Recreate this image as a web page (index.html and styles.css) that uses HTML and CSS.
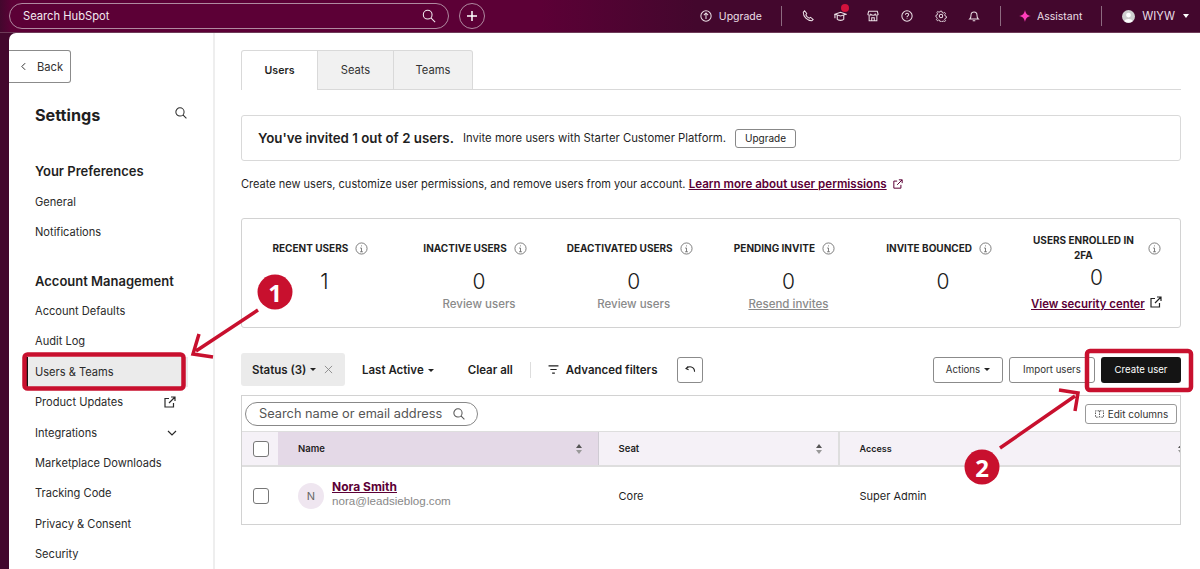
FILE: index.html
```html
<!DOCTYPE html>
<html lang="en">
<head>
<meta charset="utf-8">
<title>Users &amp; Teams</title>
<link rel="stylesheet" href="styles.css">
</head>
<body>
<header class="topbar">
  <div class="global-search"><span>Search HubSpot</span>
    <svg class="ic16" viewBox="0 0 16 16"><circle cx="6.5" cy="6.5" r="5"/><path d="M10.2 10.2 15 15"/></svg>
  </div>
  <div class="plus"><svg viewBox="0 0 12 12"><path d="M6 1v10M1 6h10"/></svg></div>
  <div class="top-right">
    <div class="top-item"><svg class="ic13" viewBox="0 0 14 14"><circle cx="7" cy="7" r="6"/><path d="M7 10.5v-7M4.5 6 7 3.5 9.500 6"/></svg><span>Upgrade</span></div>
    <i class="top-sep sep-a"></i>
    <svg class="ic12 t1" viewBox="0 0 14 14"><path d="M3 1 1.500 2.500C1.500 8 6 12.500 11.500 12.500L13 11 10 8.500 8.500 9.500C7 9 5 7 4.500 5.500L5.500 4Z"/></svg>
    <div class="grad"><svg class="ic14" viewBox="0 0 14 14"><path d="M1 4.500 7 2.500l6 2-6 2zM3.500 6v4c1 1.500 6 1.500 7 0V6M1 9V4.500"/></svg><b></b></div>
    <svg class="ic12 t2" viewBox="0 0 14 14"><path d="M2 1.500h10L13 5c-.5 1.500-3 1.500-3.500 0-.5 1.500-4 1.500-5 0C4 6.500 1.500 6.500 1 5zM2.500 7v5.500h9V7M5.500 12.500V9h3v3.500"/></svg>
    <svg class="ic12 t3" viewBox="0 0 14 14"><circle cx="7" cy="7" r="6"/><path d="M5.200 5.500C5.200 3 9 3.300 8.900 5.500 8.800 7 7 6.800 7 8.500M7 10v.6"/></svg>
    <svg class="ic12 t4" viewBox="0 0 14 14"><circle cx="7" cy="7" r="2"/><path d="M6 1h2l.4 1.700 1.600.7 1.500-.9 1.200 1.500-1 1.400.5 1.600 1.600.7v1.800l-1.600.6-.5 1.600 1 1.400-1.300 1.300-1.500-1-1.600.7L8 14.500H6l-.4-1.700-1.600-.7-1.500 1L1.200 11.800l1-1.400-.6-1.600L0.500 8.100V6.300l1.600-.6.500-1.600-1-1.400 1.300-1.300 1.500.9 1.600-.7Z" transform="translate(.6 .5) scale(.92)"/></svg>
    <svg class="ic12 t5" viewBox="0 0 14 14"><path d="M2 10.500c1.200-1 1.500-2 1.500-4.500C3.500 1 10.500 1 10.500 6c0 2.500.3 3.500 1.500 4.500ZM5.500 12.500h3"/></svg>
    <i class="top-sep sep-b"></i>
    <div class="top-item assist"><svg class="spark" viewBox="0 0 14 14"><path d="M7 0c.8 4.200 2.200 6 7 7-4.800 1-6.200 2.800-7 7-.8-4.200-2.200-6-7-7 4.800-1 6.200-2.800 7-7Z"/></svg><span>Assistant</span></div>
    <i class="top-sep sep-c"></i>
    <div class="top-item account"><svg class="avatar-dot" viewBox="0 0 14 14"><circle class="av-bg" cx="7" cy="7" r="7"/><circle class="av-fg" cx="7" cy="5.500" r="2.600"/><path class="av-fg" d="M2.500 12c.8-3 8.200-3 9 0-2 2-7 2-9 0Z"/></svg><span class="acct-name">WIYW</span><i class="caret caret-w"></i></div>
  </div>
</header>

<div class="shell">
  <aside class="sidebar">
    <button class="back"><svg viewBox="0 0 6 10"><path d="M5 1 1 5l4 4"/></svg>Back</button>
    <div class="side-title"><h1>Settings</h1><svg class="ic12" viewBox="0 0 14 14"><circle cx="5.800" cy="5.800" r="4.800"/><path d="m9.300 9.300 4 4"/></svg></div>
    <h2 class="side-h first">Your Preferences</h2>
    <a class="side-link">General</a>
    <a class="side-link">Notifications</a>
    <h2 class="side-h second">Account Management</h2>
    <a class="side-link">Account Defaults</a>
    <a class="side-link">Audit Log</a>
    <a class="side-link active">Users &amp; Teams</a>
    <a class="side-link">Product Updates<svg class="ic12 ext" viewBox="0 0 12 12"><path d="M9.500 7v4h-8.500V2.500H5M7 1h4v4M11 1 5 7"/></svg></a>
    <a class="side-link">Integrations<svg class="chev" viewBox="0 0 10 6"><path d="m1 1 4 4 4-4"/></svg></a>
    <a class="side-link">Marketplace Downloads</a>
    <a class="side-link">Tracking Code</a>
    <a class="side-link">Privacy &amp; Consent</a>
    <a class="side-link">Security</a>
  </aside>

  <main class="main">
    <nav class="tabs">
      <div class="tab tab-users selected">Users</div>
      <div class="tab tab-seats">Seats</div>
      <div class="tab tab-teams">Teams</div>
    </nav>

    <section class="banner">
      <strong>You've invited 1 out of 2 users.</strong>
      <span>Invite more users with Starter Customer Platform.</span>
      <button class="btn-sm">Upgrade</button>
    </section>

    <p class="intro">Create new users, customize user permissions, and remove users from your account. <a>Learn more about user permissions</a><svg class="ic10" viewBox="0 0 12 12"><path d="M9.500 7v4h-8.500V2.500H5M7 1h4v4M11 1 5 7"/></svg></p>

    <section class="stats">
      <div class="stat"><div class="stat-h"><span>RECENT USERS</span><svg class="info" viewBox="0 0 14 14"><circle cx="7" cy="7" r="6"/><path d="M7 6.500v4M7 3.700v1M5.500 6.500H7M5.500 10.500h3"/></svg></div><div class="num">1</div></div>
      <div class="stat"><div class="stat-h"><span>INACTIVE USERS</span><svg class="info" viewBox="0 0 14 14"><circle cx="7" cy="7" r="6"/><path d="M7 6.500v4M7 3.700v1M5.500 6.500H7M5.500 10.500h3"/></svg></div><div class="num">0</div><div class="stat-sub">Review users</div></div>
      <div class="stat"><div class="stat-h"><span>DEACTIVATED USERS</span><svg class="info" viewBox="0 0 14 14"><circle cx="7" cy="7" r="6"/><path d="M7 6.500v4M7 3.700v1M5.500 6.500H7M5.500 10.500h3"/></svg></div><div class="num">0</div><div class="stat-sub">Review users</div></div>
      <div class="stat"><div class="stat-h"><span>PENDING INVITE</span><svg class="info" viewBox="0 0 14 14"><circle cx="7" cy="7" r="6"/><path d="M7 6.500v4M7 3.700v1M5.500 6.500H7M5.500 10.500h3"/></svg></div><div class="num">0</div><div class="stat-sub under">Resend invites</div></div>
      <div class="stat"><div class="stat-h"><span>INVITE BOUNCED</span><svg class="info" viewBox="0 0 14 14"><circle cx="7" cy="7" r="6"/><path d="M7 6.500v4M7 3.700v1M5.500 6.500H7M5.500 10.500h3"/></svg></div><div class="num">0</div></div>
      <div class="stat stat-wide"><div class="stat-h"><span>USERS ENROLLED IN 2FA</span><svg class="info" viewBox="0 0 14 14"><circle cx="7" cy="7" r="6"/><path d="M7 6.500v4M7 3.700v1M5.500 6.500H7M5.500 10.500h3"/></svg></div><div class="num">0</div><div class="stat-link"><a>View security center</a><svg class="ic12" viewBox="0 0 12 12"><path d="M9.500 7v4h-8.500V2.500H5M7 1h4v4M11 1 5 7"/></svg></div></div>
    </section>

    <section class="filters">
      <div class="chip">Status (3)<i class="caret"></i><svg class="x" viewBox="0 0 10 10"><path d="m1 1 8 8M9 1 1 9"/></svg></div>
      <div class="f-item f-last">Last Active<i class="caret"></i></div>
      <div class="f-item f-clear">Clear all</div>
      <i class="f-sep"></i>
      <div class="f-item f-adv"><svg viewBox="0 0 12 10"><path d="M.5 1h11M2.500 5h7M4.500 9h3"/></svg>Advanced filters</div>
      <button class="undo"><svg viewBox="0 0 12 10"><path d="M3.500 1.500 1 4l2.900 1.200M1 4C4 .8 10.500 1 10.500 7.500"/></svg></button>
      <div class="f-actions">
        <button class="btn">Actions<i class="caret"></i></button>
        <button class="btn">Import users</button>
        <button class="btn-primary">Create user</button>
      </div>
    </section>

    <section class="table">
      <div class="t-tools">
        <div class="t-search"><span>Search name or email address</span><svg class="ic12" viewBox="0 0 14 14"><circle cx="5.800" cy="5.800" r="4.800"/><path d="m9.300 9.300 4 4"/></svg></div>
        <button class="edit-cols"><svg viewBox="0 0 12 10"><path class="dash" d="M5.500 1H1v8h4.500M6.500 1H11v8H6.500M6 1v8"/></svg>Edit columns</button>
      </div>
      <div class="t-row t-head">
        <div class="c-check"><i class="check"></i></div>
        <div class="c-name sorted">Name<span class="sort"><i></i><i></i></span></div>
        <div class="c-seat">Seat<span class="sort"><i></i><i></i></span></div>
        <div class="c-access">Access<span class="sort clip"><i></i><i></i></span></div>
      </div>
      <div class="t-row t-body">
        <div class="c-check"><i class="check"></i></div>
        <div class="c-name user">
          <span class="avatar">N</span>
          <div class="user-text"><a>Nora Smith</a><small>nora@leadsieblog.com</small></div>
        </div>
        <div class="c-seat">Core</div>
        <div class="c-access">Super Admin</div>
      </div>
    </section>
  </main>
</div>

<svg class="annot" viewBox="0 0 1200 569" aria-hidden="true">
  <rect class="a-box" x="24.500" y="354.500" width="159" height="34" rx="3"/>
  <rect class="a-box" x="1087" y="351" width="104" height="39" rx="3"/>
  <path class="a-line" d="M258 310 196 351M199 334 193 354 213 357"/>
  <path class="a-line" d="M1000 448 1075 396M1059 390 1078 393 1075 411"/>
  <circle class="a-dot" cx="275" cy="292" r="17.500"/>
  <circle class="a-dot" cx="982" cy="467" r="17.500"/>
</svg>
<div class="num-badge b1">1</div>
<div class="num-badge b2">2</div>
</body>
</html>
```
FILE: styles.css
```css
* { box-sizing: border-box; }
html, body { margin: 0; height: 569px; overflow: hidden; }
body { background: #43072d; font-family: Inter, "Open Sans", sans-serif; color: #1f1f1f; font-size: 11.200px; position: relative; }
button { font-family: inherit; cursor: pointer; }
svg { fill: none; stroke: currentColor; stroke-width: 1.200; flex: none; }
.ic16 { width: 14px; height: 14px; }
.ic14 { width: 13px; height: 13px; }
.ic13 { width: 12px; height: 12px; }
.ic12 { width: 12px; height: 12px; }
.ic10 { width: 10px; height: 10px; margin-left: 6px; vertical-align: -1px; }

.topbar { height: 33px; display: flex; align-items: center; padding-left: 9px; color: #fff; background: linear-gradient(90deg, #43072d 0, #5c0036 1%, #5c0036 45%, #43072d 58%); border-bottom: 1px solid #6e3b58; }
.global-search { width: 440px; height: 26px; border: 1px solid #b08aa0; border-radius: 13px; display: flex; align-items: center; justify-content: space-between; padding: 0 12px 0 13px; font-size: 11.200px; color: #f3e9ef; }
.plus { width: 26px; height: 26px; margin-left: 10px; border: 1px solid #b08aa0; border-radius: 50%; display: flex; align-items: center; justify-content: center; }
.plus svg { width: 12px; height: 12px; stroke-width: 1.500; }
.top-right { margin-left: auto; display: flex; align-items: center; height: 100%; padding-right: 11px; font-size: 10.500px; color: #eadfe5; }
.top-item { display: flex; align-items: center; gap: 7px; }
.top-sep { width: 1px; height: 20px; background: #8d6b80; }
.sep-a { margin: 0 20px 0 19px; }
.t1 { margin-right: 20px; }
.grad { position: relative; margin-right: 20px; display: flex; }
.grad b { position: absolute; top: -6px; right: -2px; width: 8px; height: 8px; border-radius: 50%; background: #d3123c; }
.t2 { margin-right: 22px; }
.t3 { margin-right: 22px; }
.t4 { margin-right: 21px; }
.sep-b { margin: 0 18px 0 20px; }
.spark { width: 12px; height: 12px; fill: #ff3dbb; stroke: none; }
.top-item.assist { gap: 6px; }
.sep-c { margin: 0 20px 0 19px; }
.avatar-dot { width: 13px; height: 13px; stroke: none; }
.av-bg { fill: #cfcfcf; }
.av-fg { fill: #fff; }
.account { gap: 7px; }
.acct-name { font-size: 11.200px; }
.caret { display: inline-block; width: 0; height: 0; border: 3px solid transparent; border-top: 3.500px solid #222; border-bottom: 0; margin-left: 4px; vertical-align: 2px; }
.caret-w { border-top-color: #fff; border-width: 4px 3.500px 0; margin-left: 1px; }

.shell { display: flex; margin-left: 9px; height: 536px; background: #fff; border-top-left-radius: 7px; overflow: hidden; }

.sidebar { width: 206px; flex: none; border-right: 2px solid #eeeeee; padding-top: 17px; color: #2a2a2a; overflow: hidden; }
.back { display: flex; align-items: center; gap: 11px; width: 62px; height: 33px; padding: 0 0 0 12px; background: #fff; border: 1px solid #8b8b8b; border-left: 0; border-radius: 0 3px 3px 0; font-size: 11.200px; color: #333; }
.back svg { width: 5px; height: 9px; }
.side-title { display: flex; justify-content: space-between; align-items: center; padding: 0 26px; margin-top: 18px; height: 28px; }
.side-title svg { margin-top: -4px; }
h1 { font-size: 16.200px; margin: 0; font-weight: 700; color: #1f1f1f; }
.side-h { font-size: 13px; font-weight: 600; margin: 0; padding-left: 26px; color: #1f1f1f; line-height: 16px; }
.side-h.first { margin-top: 34px; }
.side-h.second { margin-top: 26px; }
.side-link { display: flex; align-items: center; justify-content: space-between; height: 30.400px; padding: 0 37px 0 26px; font-size: 11.100px; }
.side-h + .side-link { margin-top: 7.500px; }
.side-h.second + .side-link { margin-top: 6.500px; }
.side-link.active { background: #ebebeb; box-shadow: inset 2px 0 0 #111; margin-left: 17px; padding-left: 9px; margin-right: 25px; padding-right: 0; }
.ext { margin-right: 0; }
.chev { width: 10px; height: 6px; margin-right: -1px; }

.main { flex: 1; padding: 17px 19px 0 26px; min-width: 0; }
.tabs { display: flex; height: 40px; border-bottom: 1px solid #d9d9d9; }
.tab { display: flex; align-items: center; justify-content: center; height: 40px; background: #f1f1f1; border: 1px solid #d9d9d9; border-left: 0; font-size: 11.200px; color: #333; }
.tab-users { width: 77px; background: #fff; border-left: 1px solid #d9d9d9; border-bottom: 0; border-top-left-radius: 3px; font-weight: 600; font-size: 10.600px; color: #1f1f1f; padding-bottom: 1px; }
.tab-seats { width: 76px; }
.tab-teams { width: 79px; border-top-right-radius: 3px; }

.banner { margin-top: 25px; height: 46px; border: 1px solid #d9d9d9; border-radius: 3px; display: flex; align-items: center; padding-left: 16px; }
.banner strong { font-size: 13.300px; font-weight: 600; color: #1f1f1f; }
.banner span { margin-left: 9px; font-size: 11.300px; }
.btn-sm { margin-left: 9px; width: 61px; height: 19px; padding: 0; background: #fff; border: 1px solid #888; border-radius: 3px; font-size: 10px; color: #222; }
.intro { margin: 15px 0 0; font-size: 11.020px; line-height: 16px; }
.intro a { font-weight: 600; font-size: 11.600px; color: #5c0036; text-decoration: underline; }
.intro svg { color: #5c0036; }

.stats { margin-top: 26px; height: 110px; border: 1px solid #d2d2d2; border-radius: 3px; display: flex; padding: 13px 0 0 5px; }
.stat { flex: 0 0 154.700px; display: flex; flex-direction: column; align-items: center; }
.stat-wide { flex: 0 0 152px; }
.stat-h { display: flex; align-items: center; justify-content: center; gap: 7px; height: 32px; margin-right: 8px; font-size: 10px; font-weight: 700; color: #1f1f1f; text-align: center; line-height: 15px; white-space: nowrap; }
.stat-wide .stat-h { gap: 9px; margin-right: 4px; }
.stat-wide .stat-h span { width: 112px; white-space: normal; }
.info { width: 13px; height: 13px; color: #666; stroke-width: .9; }
.num { font-size: 21px; line-height: 26px; margin-top: 5px; color: #1a1a1a; font-weight: 300; }
.stat-wide .num { margin-top: 1px; }
.stat-sub { margin-top: 2px; font-size: 11.500px; font-weight: 500; color: #8a8a8a; }
.stat-sub.under { text-decoration: underline; }
.stat-link { display: flex; align-items: center; gap: 5px; margin-top: 6px; font-size: 11.400px; font-weight: 600; color: #5c0036; white-space: nowrap; }
.stat-link a { text-decoration: underline; }
.stat-link svg { color: #222; margin-top: -4px; }

.filters { margin-top: 25px; display: flex; align-items: center; height: 33px; font-size: 11.500px; font-weight: 600; }
.chip { display: flex; align-items: center; width: 104px; height: 33px; padding-left: 11px; background: #ebebeb; border-radius: 3px; }
.x { width: 9px; height: 9px; margin-left: 8px; color: #888; stroke-width: 1; }
.f-last { margin-left: 17px; }
.f-clear { margin-left: 34px; }
.f-sep { width: 1px; height: 16px; background: #ddd; margin: 0 17px; }
.f-adv { display: flex; align-items: center; gap: 7px; }
.f-adv svg { width: 11px; height: 9px; }
.undo { margin-left: 20px; width: 26px; height: 26px; padding: 0; display: flex; align-items: center; justify-content: center; background: #fff; border: 1px solid #8b8b8b; border-radius: 3px; color: #222; }
.undo svg { width: 11px; height: 9px; }
.f-actions { margin-left: auto; display: flex; gap: 6px; }
.btn { height: 26px; padding: 0; background: #fff; border: 1px solid #8b8b8b; border-radius: 3px; font-size: 9.700px; font-weight: 400; color: #333; white-space: nowrap; }
.f-actions .btn:nth-child(1) { width: 70px; }
.f-actions .btn:nth-child(2) { width: 86px; }
.btn-primary { width: 80px; height: 26px; padding: 0; background: #141414; color: #fff; border: 0; border-radius: 3px; font-size: 9.600px; font-weight: 400; }

.table { margin-top: 9px; border: 1px solid #d2d2d2; height: 130px; overflow: hidden; }
.t-tools { height: 35px; display: flex; align-items: center; justify-content: space-between; padding: 0 3px; }
.t-search { width: 233px; height: 24px; border: 1px solid #888; border-radius: 12px; display: flex; align-items: center; gap: 11px; padding-left: 13px; font-size: 12.800px; color: #555; white-space: nowrap; }
.edit-cols { display: flex; align-items: center; justify-content: center; gap: 3px; width: 92px; height: 20px; padding: 0; background: #fff; border: 1px solid #999; border-radius: 3px; font-size: 10px; color: #333; }
.edit-cols svg { width: 11px; height: 8px; stroke-width: 1; }
.dash { stroke-dasharray: 2 1.300; }
.t-row { display: flex; align-items: center; }
.t-head { height: 36px; background: #f5f1f7; border-top: 1px solid #dedede; border-bottom: 2px solid #dedede; font-size: 9.500px; font-weight: 600; }
.t-head > div { height: 100%; display: flex; align-items: center; position: relative; }
.c-check { width: 36px; flex: none; padding-left: 11px; }
.check { display: block; width: 16px; height: 16px; border: 1px solid #777; border-radius: 3px; background: #fff; }
.c-name { width: 320.500px; flex: none; padding-left: 20px; }
.sorted { background: #e4d9e7; border-right: 1px solid #cfcbd3; }
.c-seat { width: 241px; flex: none; padding-left: 20px; }
.t-head .c-seat { border-right: 2px solid #dedede; }
.c-access { flex: 1; padding-left: 20px; }
.t-head .c-access { font-size: 9px; }
.sort { position: absolute; right: 16px; top: 50%; margin-top: -5px; display: flex; flex-direction: column; gap: 2px; }
.clip { right: -4px; }
.sort i { width: 0; height: 0; border: 3px solid transparent; }
.sort i:first-child { border-bottom: 4px solid #555; border-top: 0; }
.sort i:last-child { border-top: 4px solid #999; border-bottom: 0; }
.t-body { height: 58px; font-size: 11px; }
.user { display: flex; align-items: center; gap: 8px; }
.avatar { width: 26px; height: 26px; border-radius: 50%; background: #efe6f0; display: flex; align-items: center; justify-content: center; font-size: 11px; color: #666; }
.user-text { display: flex; flex-direction: column; margin-top: -4px; }
.user-text a { font-size: 12px; font-weight: 700; color: #5c0036; text-decoration: underline; line-height: 14px; }
.user-text small { font-size: 11.600px; color: #888; line-height: 14px; font-family: "Liberation Sans", sans-serif; }

.annot { position: absolute; left: 0; top: 0; width: 1200px; height: 569px; pointer-events: none; }
.a-box { fill: none; stroke: #c8102e; stroke-width: 4.500; }
.a-line { fill: none; stroke: #c8102e; stroke-width: 3.500; }
.a-dot { fill: #c8102e; stroke: none; }
.num-badge { position: absolute; width: 35px; height: 35px; line-height: 35px; text-align: center; color: #fff; font-size: 24px; font-weight: 700; font-family: "Open Sans", sans-serif; }
.b1 { left: 257.500px; top: 274.500px; }
.b2 { left: 964.500px; top: 449.500px; }
```
